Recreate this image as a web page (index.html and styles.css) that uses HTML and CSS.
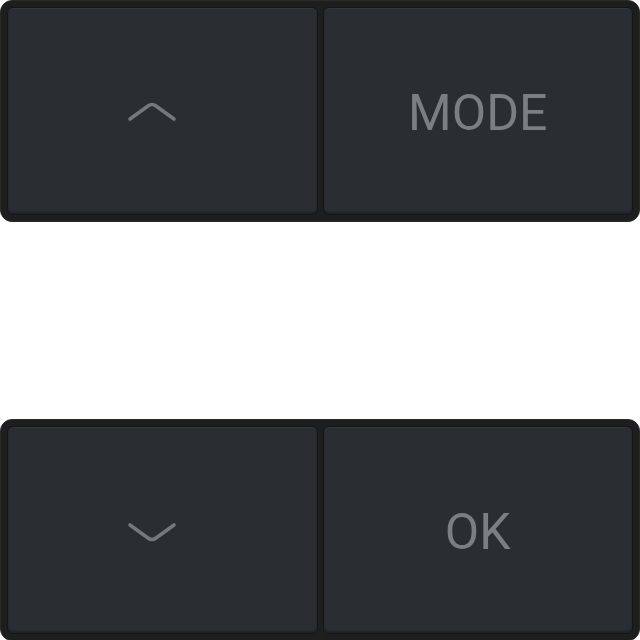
FILE: index.html
```html
<!DOCTYPE html>
<html>
<head>
<meta charset="utf-8">
<link rel="stylesheet" href="styles.css">
</head>
<body>
<div class="page">
  <div class="panel">
    <div class="btn">
      <svg class="chev" width="52" height="22" viewBox="0 0 52 22"><path d="M4 19 L22 6 Q26 3 30 6 L48 19" fill="none" stroke="#74777c" stroke-width="3.6" stroke-linecap="round" stroke-linejoin="round"/></svg>
    </div>
    <div class="btn"><span class="label">MODE</span></div>
  </div>
  <div class="panel bottom">
    <div class="btn">
      <svg class="chev down" width="52" height="22" viewBox="0 0 52 22"><path d="M4 3 L22 16 Q26 19 30 16 L48 3" fill="none" stroke="#74777c" stroke-width="3.6" stroke-linecap="round" stroke-linejoin="round"/></svg>
    </div>
    <div class="btn"><span class="label">OK</span></div>
  </div>
</div>
</body>
</html>
```
FILE: styles.css
```css
html, body {
  margin: 0;
  padding: 0;
  background: #ffffff;
  overflow: hidden;
}
.page {
  width: 640px;
  height: 640px;
  display: flex;
  flex-direction: column;
  gap: 197px;
}
.panel {
  flex: none;
  height: 222px;
  box-sizing: border-box;
  background: #1e1e1f;
  border: 1px solid #2a2a2b;
  border-radius: 12px;
  padding: 6px;
  display: grid;
  grid-template-columns: 1fr 1fr;
  gap: 5px;
}
.btn {
  background: #2a2d32;
  border: 1px solid #141516;
  border-radius: 6px;
  box-shadow: inset 0 1px 0 rgba(255,255,255,0.05), inset 0 -2px 2px rgba(0,0,0,0.25);
  display: flex;
  align-items: center;
  justify-content: center;
}
.label {
  font-family: Roboto, "Liberation Sans", sans-serif;
  font-size: 50px;
  color: #7b7e83;
  line-height: 1;
  margin-top: 3px;
}
.chev {
  display: block;
  margin-right: 20px;
}
.chev.down {
  margin-top: 6px;
}
```
